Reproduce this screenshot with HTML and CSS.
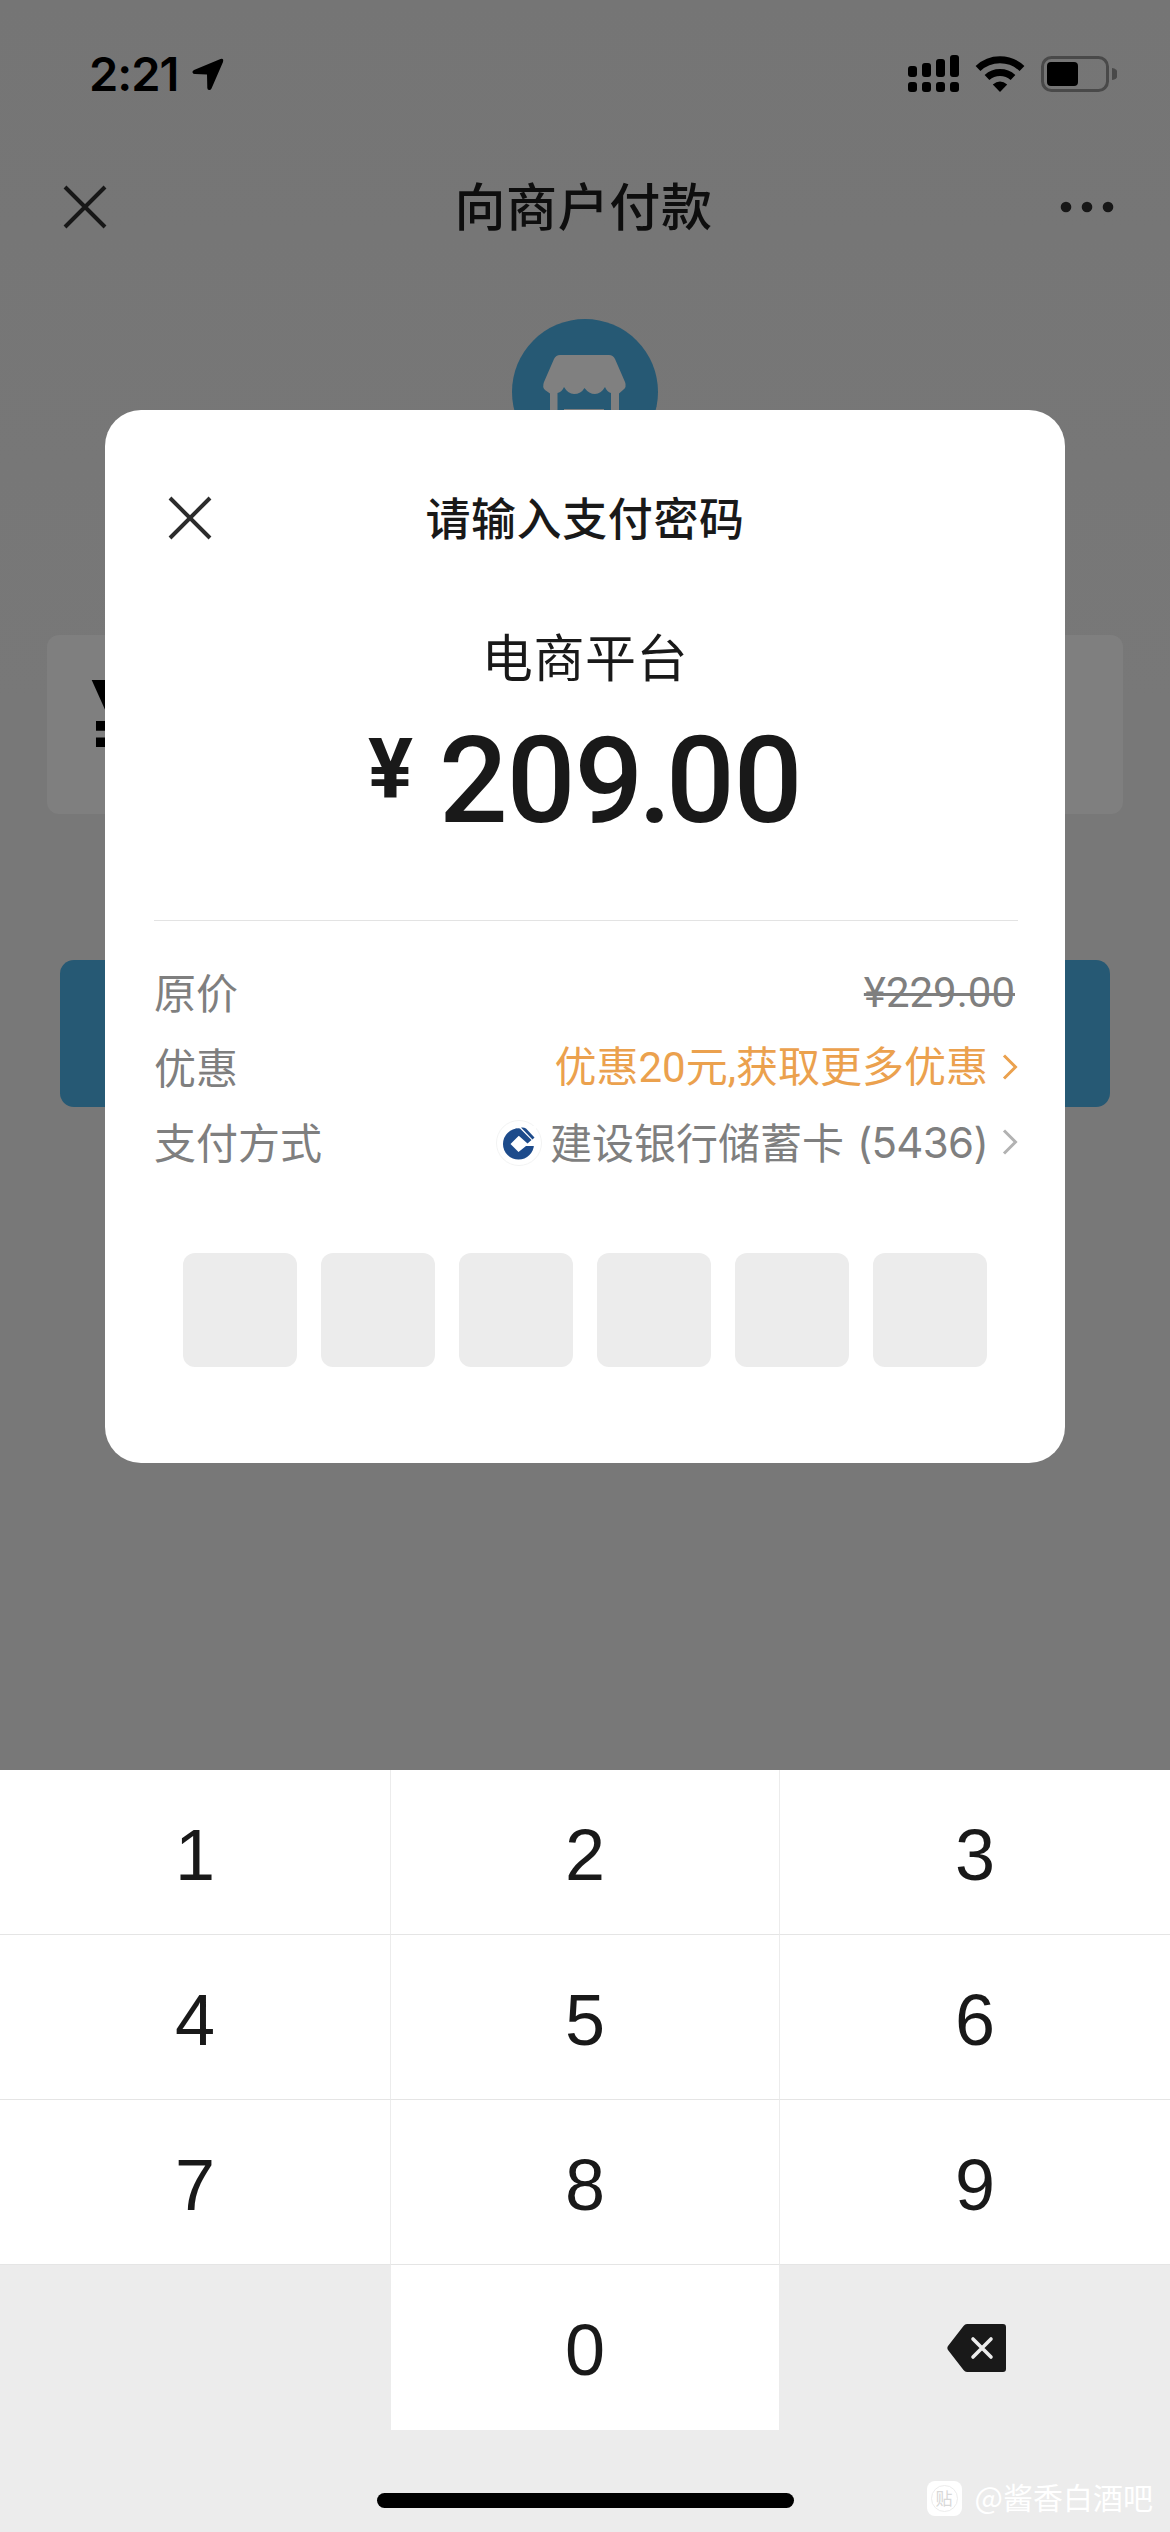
FILE: index.html
```html
<!DOCTYPE html>
<html lang="zh-CN">
<head>
<meta charset="utf-8">
<title>向商户付款</title>
<link rel="stylesheet" href="styles.css">
</head>
<body>
<div class="phone">
  <main class="page">
    <header class="status">
      <div class="status-left">
        <span class="time">2:21</span>
        <svg class="location" width="32" height="33" viewBox="0 0 32 33"><path d="M28.500 1 L2 12 Q0 13 .5 14.500 Q1 16 3 16 L15 16.500 L15.300 30 Q15.500 32 17 32 Q18.500 32.300 19.500 30.500 L31 4 Q32 0 28.500 1Z"/></svg>
      </div>
      <div class="status-right">
        <svg width="52" height="38" viewBox="0 0 52 38">
          <rect x="0" y="11" width="9" height="11" rx="3"/><rect x="14" y="8" width="9" height="14" rx="3"/><rect x="28" y="4" width="9" height="18" rx="3"/><rect x="42" y="0" width="9" height="22" rx="3"/>
          <rect x="0" y="27" width="9" height="10" rx="3"/><rect x="14" y="27" width="9" height="10" rx="3"/><rect x="28" y="27" width="9" height="10" rx="3"/><rect x="42" y="27" width="9" height="10" rx="3"/>
        </svg>
        <svg class="wifi" width="50" height="38" viewBox="0 0 50 38">
          <path d="M3 13.500a32 32 0 0 1 44 0M12 22.500a19.300 19.300 0 0 1 26 0" fill="none" stroke="#000" stroke-width="7"/>
          <path d="M25 37 L17.800 29.500 Q25 23.300 32.200 29.500Z"/>
        </svg>
        <svg class="battery" width="76" height="38" viewBox="0 0 76 38">
          <rect x="1.500" y="2.500" width="65" height="33" rx="9" fill="none" stroke="#494949" stroke-width="3"/>
          <rect x="6" y="7" width="31" height="24" rx="4"/>
          <path d="M71 13a6 6 0 0 1 0 12Z" fill="#494949"/>
        </svg>
      </div>
    </header>
    <nav class="nav">
      <svg width="44" height="44" viewBox="0 0 44 44"><path d="M2 2 42 42M42 2 2 42" stroke="#171717" stroke-width="4"/></svg>
      <h1 class="nav-title">向商户付款</h1>
      <svg width="54" height="12" viewBox="0 0 54 12"><circle cx="6" cy="6" r="5.300"/><circle cx="27" cy="6" r="5.300"/><circle cx="48" cy="6" r="5.300"/></svg>
    </nav>
    <svg class="shop" width="146" height="146" viewBox="0 0 146 146">
      <circle cx="73" cy="73" r="73" fill="#265974"/>
      <path fill="#808080" d="M48 36 H97 Q101 36 103 40 L113 63 Q115 68 111 71 L107 74.500 V100 H99 V74 Q95 73 93 68 Q89 75 83 75 Q77 75 72.500 69 Q69 75 62 75 Q56 75 52 68 Q50 73 45.500 74 V100 H38 V74.500 L33 71 Q30 68 32 63 L42 40 Q44 36 48 36Z"/>
      <path fill="#808080" d="M52 90H92V100H52z"/>
    </svg>
    <div class="amount-field">¥</div>
    <div class="pay-button"></div>
  </main>

  <section class="keypad">
    <div class="keys">
      <div class="key">1</div><div class="key">2</div><div class="key">3</div>
      <div class="key">4</div><div class="key">5</div><div class="key">6</div>
      <div class="key">7</div><div class="key">8</div><div class="key">9</div>
      <div class="key blank"></div><div class="key">0</div>
      <div class="key blank">
        <svg class="backspace" width="60" height="48" viewBox="0 0 60 48">
          <path d="M20 0 H56 Q59 0 59 3 V45 Q59 48 56 48 H20 Q18 48 16.500 46 L1 26 Q-.3 24 1 22 L16.500 2 Q18 0 20 0Z" fill="#191919"/>
          <path d="M26 15 44 33M44 15 26 33" stroke="#ececec" stroke-width="3.600" stroke-linecap="round"/>
        </svg>
      </div>
    </div>
    <div class="home-bar"></div>
  </section>

  <section class="dialog">
    <header class="dialog-head">
      <svg width="44" height="44" viewBox="0 0 44 44"><path d="M2 2 42 42M42 2 2 42" stroke="#2c2c2c" stroke-width="4"/></svg>
      <h2 class="dialog-title">请输入支付密码</h2>
    </header>
    <div class="merchant">电商平台</div>
    <div class="total"><span class="currency">¥</span><span class="sum">209<span class="dot">.</span>00</span></div>
    <div class="rows">
      <div class="row"><span>原价</span><s class="old-price">¥229.00</s></div>
      <div class="row"><span>优惠</span>
        <span class="value discount"><span>优惠<span class="din">20</span>元<span class="din">,</span>获取更多优惠</span>
          <svg class="chevron" width="16" height="26" viewBox="0 0 16 26"><path d="M2 1.500 13.500 13 2 24.500"/></svg></span></div>
      <div class="row"><span>支付方式</span>
        <span class="value">
          <svg class="bank" width="46" height="46" viewBox="0 0 46 46">
            <circle cx="23" cy="23" r="22.500" fill="#fff" stroke="#f2f3f3"/>
            <circle cx="22.500" cy="24" r="15.500" fill="#1d4b8b"/>
            <path d="M22 6 L40 6 V26 H30 L22.500 32 L14.500 24 L24 14.500 L20 11Z" fill="#fff"/>
            <path d="M18 9.200 Q21 8 24 8.500 L35.500 20 L31.500 23.500 L22.500 15.500 L16 19Z" fill="#1d4b8b"/>
            <path d="M25 7.500 Q28 7 30 8.500 L38.500 17.500 L36.500 19.500Z" fill="#1d4b8b"/>
          </svg>
          <span class="card">建设银行储蓄卡</span><span class="tail">(5436)</span>
          <svg class="chevron" width="16" height="26" viewBox="0 0 16 26"><path d="M2 1.500 13.500 13 2 24.500"/></svg></span></div>
    </div>
    <div class="pin"><i></i><i></i><i></i><i></i><i></i><i></i></div>
  </section>

  <div class="watermark">
    <span class="badge"><span class="badge-text">贴</span></span>
    <span class="watermark-name">@酱香白酒吧</span>
  </div>
</div>
</body>
</html>
```
FILE: styles.css
```css
* { box-sizing: border-box; }
body { margin: 0; font-family: "Noto Sans CJK SC", sans-serif; }
h1, h2 { margin: 0; font-weight: 500; }
svg { display: block; flex: none; }

.phone {
  position: relative;
  display: flex;
  flex-direction: column;
  width: 1170px;
  height: 2532px;
  overflow: hidden;
}
.page {
  height: 1770px;
  display: flex;
  flex-direction: column;
  align-items: center;
  background: linear-gradient(#757575, #787878 700px);
}

.status {
  align-self: stretch;
  height: 148px;
  padding: 0 53px 0 89px;
  display: flex;
  align-items: center;
  justify-content: space-between;
}
.status-left { display: flex; align-items: center; gap: 13px; }
.time {
  font: 600 47px/60px "Inter", sans-serif;
  width: 90px;
  white-space: nowrap;
  letter-spacing: -1px;
}
.status-right { display: flex; align-items: center; }
.wifi { margin: 0 16px 0 15px; }

.nav {
  align-self: stretch;
  height: 118px;
  padding: 0 56px 0 63px;
  display: flex;
  align-items: center;
  justify-content: space-between;
  fill: #171717;
}
.nav-title {
  padding-bottom: 6px;
  font-size: 51px;
  line-height: 76px;
  letter-spacing: .6px;
  color: #0e0e0e;
}
.shop { margin-top: 53px; }
.amount-field {
  width: 1076px;
  height: 179px;
  margin-top: 170px;
  padding-left: 44px;
  border-radius: 12px;
  background: #7f7f7f;
  font: 700 116px/176px "Roboto", sans-serif;
}
.pay-button {
  width: 1050px;
  height: 147px;
  margin-top: 146px;
  border-radius: 14px;
  background: #265974;
}

.keypad { flex: 1; background: #ececec; }
.keys {
  display: grid;
  grid-template-columns: 391px 389px 390px;
  grid-auto-rows: 165px;
}
.key {
  display: flex;
  align-items: center;
  justify-content: center;
  padding-top: 5px;
  background: #fff;
  border-bottom: 1px solid #e5e5e5;
  border-right: 1px solid #ececec;
  font: 72px/80px "Liberation Sans", sans-serif;
  color: #191919;
}
.key:nth-child(3n) { border-right: 0; }
.key:nth-child(11) { border-bottom: 0; }
.blank { padding: 2px 0 0 4px; background: #ececec; border-color: #ececec; }
.home-bar {
  width: 417px;
  height: 15px;
  margin: 63px auto 0;
  border-radius: 8px;
  background: #000;
}

.dialog {
  position: absolute;
  left: 105px;
  top: 410px;
  width: 960px;
  height: 1053px;
  padding: 77px 49px 0;
  border-radius: 36px;
  background: #fff;
  color: #191919;
}
.dialog-head {
  height: 60px;
  display: grid;
  grid-template-columns: 44px 1fr 44px;
  align-items: center;
  padding: 0 14px;
}
.dialog-title {
  padding-bottom: 2px;
  font-size: 45px;
  line-height: 60px;
  letter-spacing: .6px;
  text-align: center;
  white-space: nowrap;
}
.merchant { margin-top: 73px; font-size: 51px; line-height: 70px; letter-spacing: .6px; text-align: center; }
.total {
  height: 120px;
  margin-top: 30px;
  padding-left: 214px;
  display: flex;
  font-family: "Roboto", sans-serif;
  font-weight: 500;
}
.currency { width: 71px; font-size: 84px; line-height: 100px; font-weight: 700; }
.sum { font-size: 121px; line-height: 122px; letter-spacing: -1px; }
.dot { margin: 0 -5px 0 -4px; }
.rows { margin: 80px -2px 0 0; padding-top: 34px; border-top: 1px solid #e3e3e3; }
.row {
  height: 75px;
  padding-bottom: 3px;
  display: flex;
  align-items: center;
  justify-content: space-between;
  font-size: 42px;
  line-height: 60px;
  color: #7f7f7f;
}
.old-price {
  margin: 3px 3px 0 0;
  font-family: "Roboto", sans-serif;
  text-decoration-thickness: 3px;
}
.value { display: flex; align-items: center; }
.discount { color: #eba14e; }
.din { font-family: "Roboto", sans-serif; }
.chevron { margin: 2px 0 0 14px; fill: none; stroke: #b2b2b2; stroke-width: 3; }
.discount .chevron { stroke: #eba14e; }
.bank { margin: 3px 8px 0 0; }
.tail { margin: 3px 0 0 13px; font-family: "Inter", sans-serif; letter-spacing: -.7px; }
.pin { display: flex; justify-content: center; gap: 24px; margin-top: 73px; }
.pin i { width: 114px; height: 114px; border-radius: 12px; background: #ececec; }

.watermark {
  position: absolute;
  right: 17px;
  bottom: 10px;
  display: flex;
  align-items: center;
  gap: 13px;
  color: #fff;
  font-size: 30px;
  line-height: 44px;
}
.watermark-name { padding-bottom: 4px; }
.badge { width: 35px; height: 35px; padding: 4px; border-radius: 8px; background: #fff; }
.badge-text {
  display: block;
  height: 27px;
  border: 1px solid #ececec;
  border-radius: 50%;
  font-size: 17px;
  line-height: 23px;
  text-align: center;
  color: #d8d8d8;
}
```
